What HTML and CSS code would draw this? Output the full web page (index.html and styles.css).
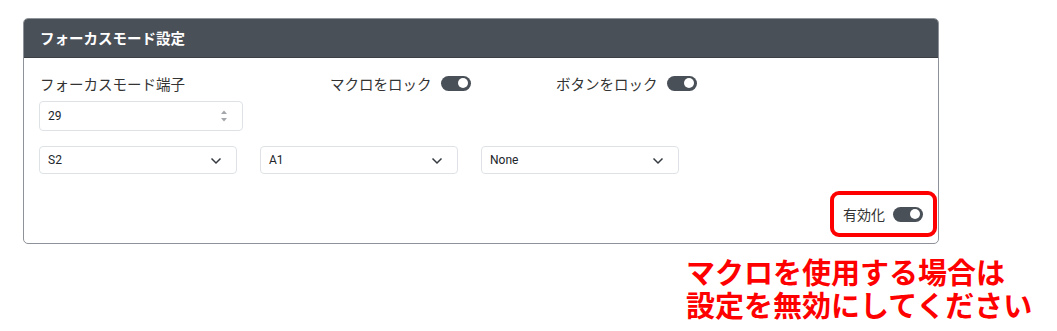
FILE: index.html
```html
<!DOCTYPE html>
<html lang="ja">
<head>
    <meta charset="UTF-8">
    <meta name="viewport" content="width=device-width, initial-scale=1.0">
    <title>フォーカスモード設定</title>
    <link rel="stylesheet" href="styles.css">
</head>
<body>
    <div class="page">
        <div class="card">
            <div class="card-header">フォーカスモード設定</div>
            <div class="card-body">
                <div class="top-row">
                    <div class="field-label">フォーカスモード端子</div>
                    <div class="lock">
                        <span>マクロをロック</span>
                        <span class="switch"><span class="knob"></span></span>
                    </div>
                    <div class="lock">
                        <span>ボタンをロック</span>
                        <span class="switch"><span class="knob"></span></span>
                    </div>
                </div>

                <div class="number-input">
                    <span>29</span>
                    <svg class="spinner" width="8" height="14" viewBox="0 0 8 14">
                        <path d="M1 5 L4 1.5 L7 5 Z" fill="#a3a7ab"/>
                        <path d="M1 9 L4 12.5 L7 9 Z" fill="#a3a7ab"/>
                    </svg>
                </div>

                <div class="select-row">
                    <div class="select-box">
                        <span>S2</span>
                        <svg class="chevron" width="12" height="8" viewBox="0 0 12 8"><path d="M1.5 1.5 L6 6 L10.5 1.5" fill="none" stroke="#343a40" stroke-width="1.5"/></svg>
                    </div>
                    <div class="select-box">
                        <span>A1</span>
                        <svg class="chevron" width="12" height="8" viewBox="0 0 12 8"><path d="M1.5 1.5 L6 6 L10.5 1.5" fill="none" stroke="#343a40" stroke-width="1.5"/></svg>
                    </div>
                    <div class="select-box">
                        <span>None</span>
                        <svg class="chevron" width="12" height="8" viewBox="0 0 12 8"><path d="M1.5 1.5 L6 6 L10.5 1.5" fill="none" stroke="#343a40" stroke-width="1.5"/></svg>
                    </div>
                </div>

                <div class="footer-row">
                    <div class="enable-box">
                        <span>有効化</span>
                        <span class="switch"><span class="knob"></span></span>
                    </div>
                </div>
            </div>
        </div>

        <div class="note">
            <div class="note-line">マクロを使用する場合は</div>
            <div class="note-line">設定を無効にしてください</div>
        </div>
    </div>
</body>
</html>
```

FILE: styles.css
```css
body {
    margin: 0;
    background-color: white;
    font-family: 'Noto Sans CJK JP', 'Noto Sans', sans-serif;
    color: #333;
}

.page {
    padding: 18px 0 0 23px;
}

.card {
    width: 914px;
    border: 1px solid #8e9399;
    border-radius: 5px;
    overflow: hidden;
}

.card-header {
    height: 38px;
    line-height: 38px;
    padding-left: 16px;
    background-color: #4a5058;
    border-bottom: 1px solid #3b4047;
    color: white;
    font-size: 14.5px;
    font-weight: bold;
}

.card-body {
    padding: 15px 15px 6px 15px;
}

.top-row {
    display: flex;
    align-items: center;
    height: 20px;
    font-size: 14.5px;
}

.field-label {
    width: 290px;
    padding-left: 1px;
}

.lock {
    width: 226px;
    display: flex;
    align-items: center;
    gap: 9px;
}

.switch {
    position: relative;
    display: inline-block;
    width: 30px;
    height: 15px;
    border-radius: 8px;
    background-color: #4a5058;
}

.knob {
    position: absolute;
    top: 2.5px;
    right: 3px;
    width: 10px;
    height: 10px;
    border-radius: 50%;
    background-color: white;
}

.number-input {
    margin-top: 8px;
    width: 180px;
    height: 28px;
    border: 1px solid #dee2e6;
    border-radius: 4px;
    display: flex;
    align-items: center;
    justify-content: space-between;
    padding: 0 14px 0 8px;
    font-family: Roboto, 'Noto Sans', sans-serif;
    font-size: 12px;
    color: #212529;
}

.select-row {
    margin-top: 15px;
    display: flex;
    gap: 23px;
}

.select-box {
    position: relative;
    width: 198px;
    height: 28px;
    box-sizing: border-box;
    border: 1px solid #dee2e6;
    border-radius: 4px;
    display: flex;
    align-items: center;
    padding-left: 8px;
    font-family: Roboto, 'Noto Sans', sans-serif;
    font-size: 12px;
    color: #212529;
}

.chevron {
    position: absolute;
    right: 14px;
    top: 10px;
}

.footer-row {
    margin-top: 17px;
    margin-right: -14px;
    display: flex;
    justify-content: flex-end;
}

.enable-box {
    width: 107px;
    height: 46px;
    box-sizing: border-box;
    border: 4px solid #ff0000;
    border-radius: 9px;
    display: flex;
    align-items: center;
    justify-content: flex-end;
    gap: 8px;
    padding-right: 10px;
    font-size: 14px;
}

.note {
    margin: 11px 0 0 663px;
    color: #ff0000;
    font-size: 29px;
    font-weight: bold;
}

.note-line {
    height: 33px;
    line-height: 33px;
}
```
